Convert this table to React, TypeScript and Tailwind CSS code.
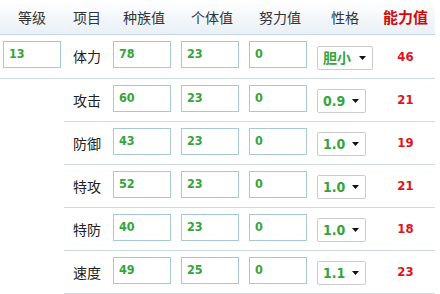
import React from "react";

const cjk = { fontFamily: '"Noto Sans CJK SC", "Noto Sans", sans-serif' };
const num = { fontFamily: '"DejaVu Sans Condensed", "DejaVu Sans", Verdana, sans-serif' };

type Row = { name: string; base: string; iv: string; ev: string; nat: string; val: string };

const rows: Row[] = [
  { name: "体力", base: "78", iv: "23", ev: "0", nat: "胆小", val: "46" },
  { name: "攻击", base: "60", iv: "23", ev: "0", nat: "0.9", val: "21" },
  { name: "防御", base: "43", iv: "23", ev: "0", nat: "1.0", val: "19" },
  { name: "特攻", base: "52", iv: "23", ev: "0", nat: "1.0", val: "21" },
  { name: "特防", base: "40", iv: "23", ev: "0", nat: "1.0", val: "18" },
  { name: "速度", base: "49", iv: "25", ev: "0", nat: "1.1", val: "23" },
];

function Box({ v }: { v: string }) {
  return (
    <div
      className="w-[58px] h-[27px] border border-[#a7c8d8] bg-white pl-[5px] flex items-center text-[12.5px] font-bold text-[#36a43c]"
      style={num}
    >
      {v}
    </div>
  );
}

function Sel({ v, wide }: { v: string; wide: boolean }) {
  const isCjk = wide;
  return (
    <div
      className={`${wide ? "w-[56px]" : "w-[49px]"} h-[24px] border border-[#cccccc] rounded-[2px] bg-white pl-[5px] pr-[6px] flex items-center justify-between font-bold text-[#36a43c]`}
    >
      <span className={isCjk ? "text-[14px]" : "text-[14px]"} style={isCjk ? cjk : num}>
        {v}
      </span>
      <svg width="7" height="4" viewBox="0 0 7 4">
        <path d="M0 0H7L3.5 4Z" fill="#111" />
      </svg>
    </div>
  );
}

export default function App() {
  return (
    <div className="w-[440px] h-[294px] bg-white overflow-hidden">
      <div className="w-[435px]">
        <div
          className="flex h-[35px] border-b border-[#c6d7e2] bg-gradient-to-b from-white to-[#e9f0f6] text-[14px] text-[#333]"
          style={cjk}
        >
          <div className="w-[64px] flex items-center justify-center">等级</div>
          <div className="w-[46px] flex items-center justify-center">项目</div>
          <div className="w-[68px] flex items-center justify-center">种族值</div>
          <div className="w-[68px] flex items-center justify-center">个体值</div>
          <div className="w-[68px] flex items-center justify-center">努力值</div>
          <div className="w-[62px] flex items-center justify-center">性格</div>
          <div className="flex-1 flex items-center justify-center text-[15px] font-bold text-[#d20a0a]">能力值</div>
        </div>
        {rows.map((r, i) => (
          <div key={r.name} className={`flex ${i === 0 ? "h-[44px] border-b border-[#cbd9e2]" : "h-[43px]"}`}>
            <div className="w-[64px] pl-[3px] pb-[4px] flex items-center">
              {i === 0 ? <Box v="13" /> : null}
            </div>
            <div className={`flex-1 flex ${i === 0 ? "" : "border-b border-[#cbd9e2]"}`}>
              <div className="w-[46px] flex items-center justify-center text-[14px] text-[#222]" style={cjk}>
                {r.name}
              </div>
              <div className="w-[68px] pl-[3px] pb-[4px] flex items-center">
                <Box v={r.base} />
              </div>
              <div className="w-[68px] pl-[3px] pb-[4px] flex items-center">
                <Box v={r.iv} />
              </div>
              <div className="w-[68px] pl-[3px] pb-[4px] flex items-center">
                <Box v={r.ev} />
              </div>
              <div className="w-[62px] pl-[3px] pt-[2px] flex items-center">
                <Sel v={r.nat} wide={i === 0} />
              </div>
              <div
                className="flex-1 flex items-center justify-center text-[13px] font-bold text-[#e0121c]"
                style={num}
              >
                {r.val}
              </div>
            </div>
          </div>
        ))}
      </div>
    </div>
  );
}
